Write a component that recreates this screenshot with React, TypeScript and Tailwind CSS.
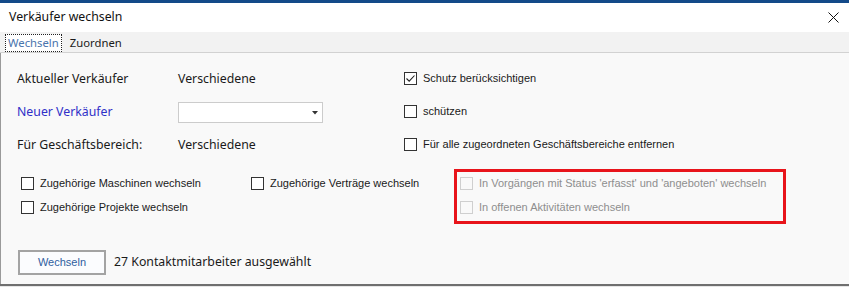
import React from "react";

function Box({ checked = false, disabled = false }: { checked?: boolean; disabled?: boolean }) {
  return (
    <span
      className={
        "flex h-[13px] w-[13px] shrink-0 items-center justify-center border " +
        (disabled ? "border-[#cfcfcf] bg-[#f9f9f9]" : "border-[#333333] bg-white")
      }
    >
      {checked && (
        <svg width="11" height="11" viewBox="0 0 11 11">
          <path d="M1.5 5.5 L4.2 8.2 L9.5 2.5" fill="none" stroke="#222" strokeWidth="1.1" />
        </svg>
      )}
    </span>
  );
}

function Check({ label, checked = false, disabled = false }: { label: string; checked?: boolean; disabled?: boolean }) {
  return (
    <div className="flex items-center gap-[6px]">
      <Box checked={checked} disabled={disabled} />
      <span
        className={
          "whitespace-nowrap text-[11px] leading-[13px] " + (disabled ? "text-[#8e8e8e]" : "text-[#1a1a1a]")
        }
        style={{ fontFamily: '"Liberation Sans", Arial, sans-serif' }}
      >
        {label}
      </span>
    </div>
  );
}

const seg = { fontFamily: '"Noto Sans", "Open Sans", sans-serif' };

export default function App() {
  return (
    <div className="relative h-[287px] w-[849px] overflow-hidden bg-[#f9f9f9]" style={seg}>
      <div className="h-[3px] bg-[#134a89]" />
      <div className="flex h-[29px] items-center justify-between bg-white pl-[9px] pr-[9px]">
        <span className="text-[12.3px] leading-none text-[#111]">Verkäufer wechseln</span>
        <svg width="11" height="11" viewBox="0 0 11 11" className="mr-[1px]">
          <path d="M0.5 0.5 L10.5 10.5 M10.5 0.5 L0.5 10.5" stroke="#111" strokeWidth="1" />
        </svg>
      </div>
      <div className="flex h-[21px] items-end gap-[8px] border-b border-[#d2d2d2] bg-[#f2f2f2] pl-[5px]">
        <div className="flex h-[18px] items-center border border-dotted border-[#222] bg-white px-[2px] text-[11.3px] text-[#4a74ad]">
          Wechseln
        </div>
        <div className="flex h-[18px] items-center text-[11.3px] text-[#1a1a1a]">Zuordnen</div>
      </div>
      <div className="h-[231px] border-l border-[#9a9a9a] bg-[#f9f9f9] pt-[10px]">
        {[
          { l: "Aktueller Verkäufer", blue: false, v: "Verschiedene", c: "Schutz berücksichtigen", ch: true },
          { l: "Neuer Verkäufer", blue: true, v: null, c: "schützen", ch: false },
          { l: "Für Geschäftsbereich:", blue: false, v: "Verschiedene", c: "Für alle zugeordneten Geschäftsbereiche entfernen", ch: false },
        ].map((r, i) => (
          <div key={i} className="flex h-[33px] items-center">
            <div
              className={"w-[177px] pl-[16px] text-[12.3px] " + (r.blue ? "text-[#3030c8]" : "text-[#1a1a1a]")}
            >
              {r.l}
            </div>
            <div className="w-[226px] text-[12.3px] text-[#1a1a1a]">
              {r.v ?? (
                <div className="flex h-[21px] w-[145px] items-center justify-end border border-[#cccccc] bg-white pr-[4px]">
                  <svg width="6" height="4" viewBox="0 0 6 4">
                    <path d="M0 0 L6 0 L3 3.5 Z" fill="#333" />
                  </svg>
                </div>
              )}
            </div>
            <div className="mb-[3px]">
              <Check label={r.c} checked={r.ch} />
            </div>
          </div>
        ))}
        <div className="mt-[7px] flex">
          <div className="flex w-[250px] flex-col pl-[20px] pt-[3px]">
            <div className="flex h-[22px] items-center">
              <Check label="Zugehörige Maschinen wechseln" />
            </div>
            <div className="flex h-[26px] items-center">
              <Check label="Zugehörige Projekte wechseln" />
            </div>
          </div>
          <div className="flex w-[203px] flex-col pt-[3px]">
            <div className="flex h-[22px] items-center">
              <Check label="Zugehörige Verträge wechseln" />
            </div>
          </div>
          <div className="flex h-[55px] w-[332px] flex-col border-[3px] border-[#e8141b] pl-[3px]">
            <div className="flex h-[22px] items-center">
              <Check label="In Vorgängen mit Status 'erfasst' und 'angeboten' wechseln" disabled />
            </div>
            <div className="flex h-[26px] items-center">
              <Check label="In offenen Aktivitäten wechseln" disabled />
            </div>
          </div>
        </div>
        <div className="mt-[26px] flex items-center gap-[8px] pl-[17px]">
          <div
            className="flex h-[25px] w-[88px] items-center justify-center border-2 border-[#a3a3a3] bg-[#fbfcfe] text-[11px] text-[#2f5e9e]"
            style={{ fontFamily: '"Liberation Sans", Arial, sans-serif' }}
          >
            Wechseln
          </div>
          <span className="text-[12.3px] text-[#1a1a1a]">27 Kontaktmitarbeiter ausgewählt</span>
        </div>
      </div>
      <div className="h-[2px] bg-[#6f6f6f]" />
      <div className="h-[10px] bg-[#e6e6e6]" />
    </div>
  );
}
